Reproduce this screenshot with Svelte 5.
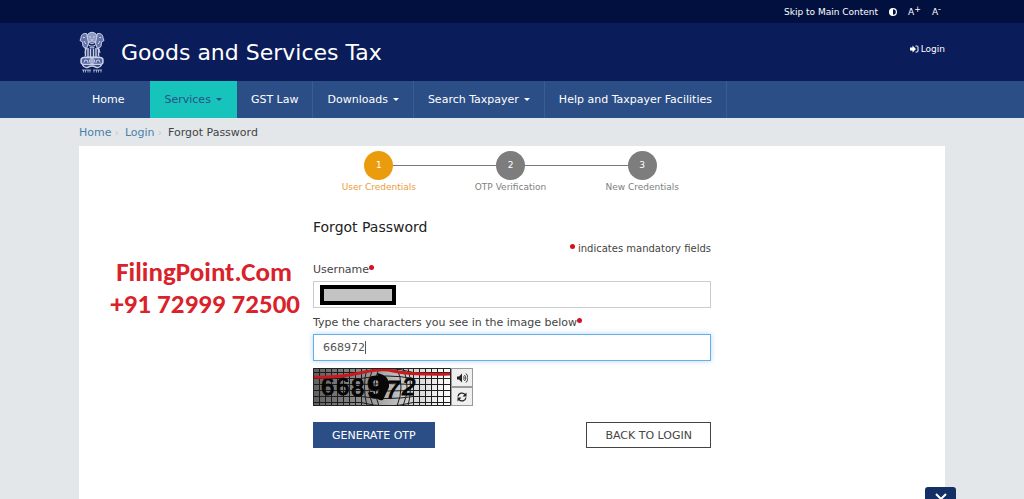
<script lang="ts">
  interface MenuItem {
    label: string;
    dropdown?: boolean;
    active?: boolean;
  }

  const menu: MenuItem[] = [
    { label: 'Home' },
    { label: 'Services', dropdown: true, active: true },
    { label: 'GST Law' },
    { label: 'Downloads', dropdown: true },
    { label: 'Search Taxpayer', dropdown: true },
    { label: 'Help and Taxpayer Facilities' },
  ];

  const steps = ['User Credentials', 'OTP Verification', 'New Credentials'];
  const current = 0;

  let username = '';
  let captcha = '668972';
</script>

<div class="page">
  <div class="topbar">
    <div class="container topbar-links">
      <a href="#main">Skip to Main Content</a>
      <button class="plain" type="button" aria-label="Toggle contrast">
        <svg width="8" height="8" viewBox="0 0 16 16">
          <circle cx="8" cy="8" r="6.8" fill="none" stroke="#fff" stroke-width="2.4" />
          <path d="M8 1a7 7 0 0 0 0 14z" fill="#fff" />
        </svg>
      </button>
      <button class="plain" type="button">A<sup>+</sup></button>
      <button class="plain" type="button">A<sup>-</sup></button>
    </div>
  </div>

  <header>
    <div class="container brand">
      <svg class="emblem" width="26" height="42" viewBox="0 0 52 84" fill="none" stroke="#c9d0e6" stroke-width="2">
        <path d="M18 6q8-7 16 0l3 7-3 9H18l-3-9z" fill="#8f9bc4" />
        <path d="M15 5Q4 4 4 14l-2 5 5 3 1 9 7 5 4-12zM37 5q11-1 11 9l2 5-5 3-1 9-7 5-4-12z" fill="#6674aa" />
        <path d="M20 12h4m4 0h4M23 17q3 3 6 0M19 22q7 7 14 0M18 27q8 7 16 0M8 13h4m28 0h4M10 20l4 6m28-6-4 6M21 32q5 4 10 0" />
        <path d="M13 33v17m5-16v18m5-17v17m6-17v17m5-18v18m5-19v17" stroke-width="3" />
        <path d="M10 52h32M14 36l-2 8m28-8 2 8" />
        <rect x="4" y="53" width="44" height="14" rx="6" fill="#5564a0" stroke-width="3" />
        <circle cx="26" cy="60" r="5" />
        <path d="M26 55v10m-5-5h10M10 63l2-5 5 1 1 5m16 0 1-5 5-1 2 5" />
        <path d="M7 68q4 7 12 4 7-4 14 0 8 3 12-4" stroke-width="3" />
        <path d="M6 78h18m4 0h18M9 78v5m4-5v5m5-5v5m4-5v5m8-5v5m5-5v5m4-5v5m5-5v5" stroke-width="1.5" />
      </svg>
      <h1>Goods and Services Tax</h1>
      <a class="login" href="#login">
        <svg width="9" height="8" viewBox="0 0 18 16">
          <path d="M0 5h5V1l7 7-7 7v-4H0z" fill="#fff" />
          <path d="M11 2h3q2 0 2 2v8q0 2-2 2h-3" fill="none" stroke="#fff" stroke-width="2" />
        </svg>
        Login
      </a>
    </div>
  </header>

  <nav>
    <ul class="container menu">
      {#each menu as item}
        <li class:active={item.active}>
          <a href="#menu">
            {item.label}
            {#if item.dropdown}<span class="caret"></span>{/if}
          </a>
        </li>
      {/each}
    </ul>
  </nav>

  <div class="container content">
    <ol class="breadcrumb">
      <li><a href="#home">Home</a></li>
      <li><a href="#login">Login</a></li>
      <li>Forgot Password</li>
    </ol>

    <main id="main">
      <aside class="contact">
        <p>FilingPoint.Com</p>
        <p>+91 72999 72500</p>
      </aside>

      <form on:submit|preventDefault>
        <ol class="steps">
          {#each steps as step, i}
            <li class:current={i === current}>
              <span class="circle">{i + 1}</span>
              <span class="step-label">{step}</span>
            </li>
          {/each}
        </ol>

        <h2>Forgot Password</h2>
        <p class="mandatory"><span class="dot"></span> indicates mandatory fields</p>

        <label for="username">Username<span class="dot"></span></label>
        <div class="field">
          <input id="username" type="text" bind:value={username} />
          <span class="redacted"></span>
        </div>

        <label for="captcha">Type the characters you see in the image below<span class="dot"></span></label>
        <div class="field focused">
          <input id="captcha" type="text" bind:value={captcha} />
          <span class="cursor"><span class="typed">{captcha}</span></span>
        </div>

        <div class="captcha">
          <svg width="138" height="38" viewBox="0 0 138 38" role="img" aria-label="Captcha">
            <defs>
              <linearGradient id="shade">
                <stop offset="0" stop-color="#606060" />
                <stop offset="0.35" stop-color="#8c8c8c" />
                <stop offset="0.7" stop-color="#cfcfcf" />
                <stop offset="1" stop-color="#fff" />
              </linearGradient>
            </defs>
            <rect width="138" height="38" fill="url(#shade)" />
            <g fill="none" stroke="#1c1c1c" stroke-width="1">
              {#each [6, 12, 18, 24, 30, 36, 42, 48, 100, 106, 112, 118, 124, 130] as x}
                <path d="M{x}.5 0v38" />
              {/each}
              {#each [4, 10, 16, 22, 28, 34] as y}
                <path d="M0 {y}.5H48Q74 {y + (y - 19) / 2} 100 {y}.5H138" />
              {/each}
              <path d="M54 0q-5 19 0 38M60 0q-8 19 0 38M66 0q-8 19 0 38M84 0q8 19 0 38M90 0q8 19 0 38M95 0q5 19 0 38" />
            </g>
            <g class="digits" fill="#050505">
              <text x="8" y="27" font-size="24">6</text>
              <text x="23" y="27" font-size="24">6</text>
              <text x="38" y="28" font-size="24">8</text>
              <text x="54" y="30" font-size="32" font-weight="bold">9</text>
              <text x="73" y="30" font-size="24" font-style="italic">7</text>
              <text x="89" y="27" font-size="24" font-style="italic">2</text>
            </g>
            <path d="M64 5q13 2 12 14l-6 13q-4 1-6-2l3-10q-2-8-3-15z" fill="#080808" />
            <path d="M0 9Q25 10 47 5T80 3q18 4 58 3" fill="none" stroke="#c9191e" stroke-width="3" />
            <path d="M.5.5h137v37H.5z" fill="none" stroke="#222" />
          </svg>
          <div class="captcha-tools">
            <button type="button" aria-label="Play audio">
              <svg width="11" height="10" viewBox="0 0 22 20">
                <path d="M0 7h4l6-6v18l-6-6H0z" fill="#222" />
                <path d="M13 7q3 3 0 6M15 4q6 6 0 12M18 1q8 9 0 18" fill="none" stroke="#222" stroke-width="1.8" />
              </svg>
            </button>
            <button type="button" aria-label="Refresh captcha">
              <svg width="10" height="10" viewBox="0 0 20 20">
                <path d="M2 9a8 8 0 0 1 14-4M18 11a8 8 0 0 1-14 4" fill="none" stroke="#222" stroke-width="2.6" />
                <path d="M19 1v8h-8zM1 19v-8h8z" fill="#222" />
              </svg>
            </button>
          </div>
        </div>

        <div class="actions">
          <button class="primary" type="submit">GENERATE OTP</button>
          <button class="secondary" type="button">BACK TO LOGIN</button>
        </div>
      </form>
    </main>
  </div>

  <button class="toggle" type="button" aria-label="Scroll down">
    <svg width="12" height="8" viewBox="0 0 12 8">
      <path d="M1 1l5 5 5-5" fill="none" stroke="#fff" stroke-width="2" />
    </svg>
  </button>
</div>

<style>
  :global(body) {
    margin: 0;
    background-color: #e3e7ea;
  }

  .page {
    position: relative;
    display: flex;
    flex-direction: column;
    min-height: 100vh;
    overflow: hidden;
    background-color: #e3e7ea;
    color: #444;
    font-family: Verdana, 'DejaVu Sans', sans-serif;
    font-size: 11px;
  }

  .container {
    box-sizing: border-box;
    width: 100%;
    max-width: 866px;
    margin: 0 auto;
  }

  a {
    color: inherit;
    text-decoration: none;
  }

  button,
  input {
    font-family: inherit;
    font-size: inherit;
  }

  h1,
  h2,
  p,
  ul,
  ol {
    margin: 0;
    padding: 0;
    list-style: none;
  }

  h1,
  h2 {
    font-weight: normal;
  }

  .topbar {
    background-color: #02103f;
    color: #fff;
    font-size: 9px;
  }

  .topbar-links {
    display: flex;
    justify-content: flex-end;
    align-items: center;
    gap: 11px;
    height: 23px;
    padding-right: 4px;
  }

  .plain {
    padding: 0;
    border: none;
    background: none;
    color: inherit;
  }

  .plain svg {
    display: block;
  }

  .plain sup {
    font-size: 8px;
    line-height: 0;
    vertical-align: 3px;
  }

  header {
    background-color: #0a1c5a;
    color: #fff;
  }

  .brand {
    display: flex;
    align-items: center;
    height: 58px;
  }

  .emblem {
    margin-right: 16px;
  }

  h1 {
    font-size: 22px;
  }

  .login {
    display: flex;
    align-items: center;
    gap: 2px;
    margin-left: auto;
    padding-bottom: 6px;
    font-size: 9px;
  }

  nav {
    background-color: #2c4e86;
    color: #fff;
  }

  .menu {
    display: flex;
  }

  .menu li {
    border-right: 1px solid #3b5c92;
  }

  .menu li:first-child {
    border-right: none;
  }

  .menu a {
    display: flex;
    align-items: center;
    gap: 5px;
    height: 37px;
    padding: 0 14px;
    white-space: nowrap;
  }

  .menu li:first-child a {
    padding: 0 26px 0 13px;
  }

  .menu .active {
    border-color: #17c4bb;
    background-color: #17c4bb;
    color: #2c4e86;
  }

  .caret {
    border-top: 3px solid;
    border-left: 3px solid transparent;
    border-right: 3px solid transparent;
  }

  .content {
    display: flex;
    flex: 1;
    flex-direction: column;
  }

  .breadcrumb {
    display: flex;
    align-items: center;
    height: 28px;
  }

  .breadcrumb li + li::before {
    content: '›';
    padding: 0 6px 0 3px;
    color: #c3c9ce;
  }

  .breadcrumb a {
    color: #4a80ac;
  }

  main {
    display: grid;
    grid-template-columns: 1fr 398px 1fr;
    flex: 1;
    padding: 5px 0 50px;
    background-color: #fff;
  }

  .contact {
    padding: 105px 13px 0 0;
    color: #d9222a;
    font-family: Calibri, Carlito, Lato, sans-serif;
    font-size: 27px;
    font-weight: bold;
    line-height: 32px;
    text-align: right;
    white-space: nowrap;
  }

  .contact p:first-child {
    padding-right: 8px;
  }

  .steps {
    display: flex;
    padding-right: 3px;
    color: #808080;
    font-size: 9px;
  }

  .steps li {
    position: relative;
    display: flex;
    flex: 1;
    flex-direction: column;
    align-items: center;
  }

  .steps li + li::before {
    content: '';
    position: absolute;
    top: 14px;
    right: 50%;
    width: 100%;
    height: 1px;
    background-color: #777;
  }

  .circle {
    z-index: 1;
    width: 29px;
    border-radius: 50%;
    background-color: #7d7d7d;
    color: #fff;
    line-height: 29px;
    text-align: center;
  }

  .current .circle {
    background-color: #eb9c0c;
  }

  .steps li:first-child {
    z-index: 1;
  }

  .step-label {
    line-height: 14px;
  }

  .current .step-label {
    color: #eb9c3c;
  }

  h2 {
    margin-top: 24px;
    color: #222;
    font-size: 14px;
    line-height: 18px;
  }

  .mandatory {
    margin-top: 5px;
    font-size: 10px;
    line-height: 16px;
    text-align: right;
  }

  .dot {
    display: inline-block;
    width: 5px;
    height: 5px;
    border-radius: 50%;
    background-color: #d8101c;
    vertical-align: 3px;
  }

  label {
    display: block;
    margin-top: 7px;
    line-height: 16px;
  }

  .mandatory + label {
    margin-top: 5px;
  }

  .field {
    position: relative;
    margin-top: 3px;
  }

  input {
    display: block;
    box-sizing: border-box;
    width: 100%;
    height: 27px;
    padding: 0 9px;
    border: 1px solid #ccc;
    outline: none;
    background-color: #fff;
    color: #555;
  }

  .focused input {
    border-color: #66afe9;
    box-shadow: 0 0 5px rgb(102 175 233 / 0.5);
  }

  .redacted {
    position: absolute;
    top: 4px;
    left: 7px;
    box-sizing: border-box;
    width: 76px;
    height: 20px;
    border: 4px solid #000;
    background-color: #c3c3c3;
  }

  .cursor {
    position: absolute;
    top: 7px;
    left: 10px;
    height: 13px;
    border-right: 1px solid #555;
  }

  .typed {
    visibility: hidden;
  }

  .captcha {
    display: flex;
    margin-top: 7px;
  }

  .digits {
    font-family: 'Liberation Sans', sans-serif;
    stroke: #050505;
    stroke-width: 1px;
  }

  .captcha-tools {
    display: flex;
    flex-direction: column;
  }

  .captcha-tools button {
    display: flex;
    justify-content: center;
    align-items: center;
    width: 22px;
    height: 19px;
    padding: 0;
    border: 1px solid #999;
    background-color: #efefef;
  }

  .actions {
    display: flex;
    justify-content: space-between;
    margin-top: 16px;
  }

  .actions button {
    height: 26px;
    padding: 0 18px;
    border: 1px solid #2c4e86;
    background-color: #2c4e86;
    color: #fff;
  }

  .actions .secondary {
    border-color: #444;
    background-color: #fff;
    color: #444;
  }

  .toggle {
    position: absolute;
    right: 68px;
    bottom: 0;
    width: 31px;
    height: 12px;
    padding: 0;
    border: none;
    border-radius: 3px 3px 0 0;
    background-color: #142f66;
    overflow: hidden;
  }

  .toggle svg {
    display: block;
    margin: 6px auto 0;
  }
</style>
